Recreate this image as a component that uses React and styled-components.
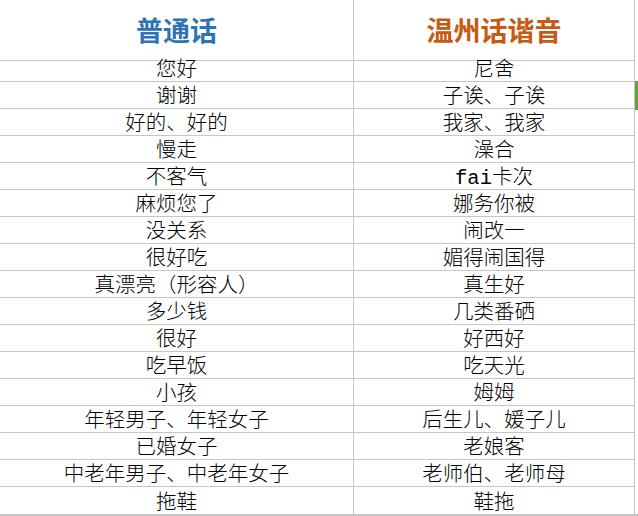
import React from 'react'
import styled, { createGlobalStyle } from 'styled-components'

const GlobalStyle = createGlobalStyle`
  html, body {
    margin: 0;
    padding: 0;
    background: #ffffff;
  }
  body {
    font-family: "Liberation Mono", "Noto Sans CJK SC", monospace;
  }
`

const Sheet = styled.div`
  position: relative;
  width: 638px;
  height: 516px;
  overflow: hidden;
`

const Table = styled.div`
  display: grid;
  grid-template-columns: 354px 281px;
  border-bottom: 2px solid #c6c6c6;
`

const HeadCell = styled.div`
  height: 61px;
  display: flex;
  align-items: center;
  justify-content: center;
  padding-bottom: 1px;
  box-sizing: border-box;
  border-bottom: 1px solid #c6c6c6;
  border-right: 1px solid #c6c6c6;
  font-family: "Noto Sans CJK SC", sans-serif;
  font-weight: 700;
  font-size: 27px;
  color: ${(p) => p.$color};
`

const Cell = styled.div`
  height: ${(p) => (p.$short ? '21px' : '27px')};
  display: flex;
  align-items: flex-end;
  justify-content: center;
  box-sizing: border-box;
  border-bottom: ${(p) => (p.$last ? '0' : '1px solid #c6c6c6')};
  border-right: 1px solid #c6c6c6;
  font-size: 20.5px;
  line-height: 1;
  font-weight: 300;
  color: #000000;
  white-space: nowrap;
`

// 오른쪽 끝 초록 표시
const Marker = styled.div`
  position: absolute;
  right: 0;
  top: 81px;
  width: 3px;
  height: 29px;
  background: #5fa33c;
`

const rows = [
  ['您好', '尼舍'],
  ['谢谢', '子诶、子诶'],
  ['好的、好的', '我家、我家'],
  ['慢走', '澡合'],
  ['不客气', 'fai卡次'],
  ['麻烦您了', '娜务你被'],
  ['没关系', '闹改一'],
  ['很好吃', '媚得闹国得'],
  ['真漂亮（形容人）', '真生好'],
  ['多少钱', '几类番硒'],
  ['很好', '好西好'],
  ['吃早饭', '吃天光'],
  ['小孩', '姆姆'],
  ['年轻男子、年轻女子', '后生儿、媛子儿'],
  ['已婚女子', '老娘客'],
  ['中老年男子、中老年女子', '老师伯、老师母'],
  ['拖鞋', '鞋拖'],
]

export default function App() {
  return (
    <Sheet>
      <GlobalStyle />
      <Table>
        <HeadCell $color="#2e74b5">普通话</HeadCell>
        <HeadCell $color="#c55a11">温州话谐音</HeadCell>
        {rows.map((row, i) => (
          <React.Fragment key={i}>
            <Cell $short={i === 0} $last={i === rows.length - 1}>
              {row[0]}
            </Cell>
            <Cell $short={i === 0} $last={i === rows.length - 1}>
              {row[1]}
            </Cell>
          </React.Fragment>
        ))}
      </Table>
      <Marker />
    </Sheet>
  )
}
